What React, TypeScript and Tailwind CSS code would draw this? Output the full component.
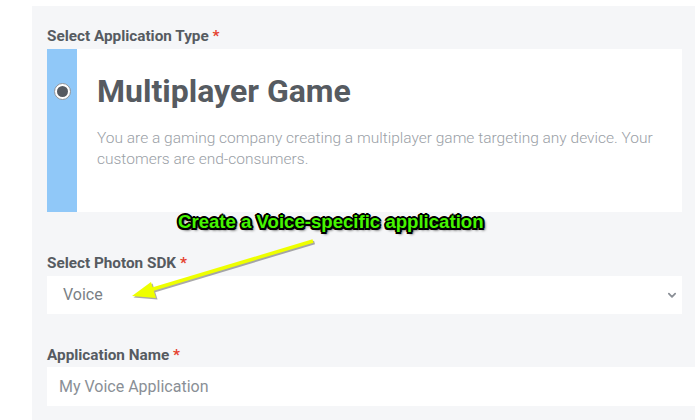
import React from "react";

const Label = ({ text }: { text: string }) => (
  <div className="h-[20px] text-[15.3px] leading-[20px] font-bold text-[#565b61]">
    {text} <span className="text-[#e5422f]">*</span>
  </div>
);

const App = () => {
  return (
    <div
      className="relative w-[695px] h-[420px] overflow-hidden bg-white"
      style={{ fontFamily: "Roboto, 'Liberation Sans', sans-serif" }}
    >
      <div className="ml-[32px] mt-[6px] h-[414px] bg-[#f5f6f8] pl-[15px] pt-[20px]">
        <Label text="Select Application Type" />

        {/* Application type card */}
        <div className="mt-[3px] flex h-[163px] w-[635px] bg-white">
          <div className="w-[30px] shrink-0 bg-[#90c8f8] pt-[34px] pl-[7px]">
            <div className="flex h-[17px] w-[17px] items-center justify-center rounded-full border border-[#8f949a] bg-white">
              <div className="h-[11px] w-[11px] rounded-full bg-[#555a61]" />
            </div>
          </div>
          <div className="pl-[20px] pr-[20px] pt-[22px]">
            <h1 className="text-[32px] leading-[40px] font-bold text-[#565b61]">
              Multiplayer Game
            </h1>
            <p className="mt-[17px] text-[15.5px] leading-[21px] font-light text-[#9aa0a6]">
              You are a gaming company creating a multiplayer game targeting any device. Your
              customers are end-consumers.
            </p>
          </div>
        </div>

        <div className="mt-[41px]">
          <Label text="Select Photon SDK" />
        </div>
        <div className="mt-[3px] flex h-[38px] w-[635px] items-center justify-between bg-white pl-[16px] pr-[1px]">
          <span className="text-[16px] text-[#7a7f85]">Voice</span>
          <svg width="18" height="18" viewBox="0 0 20 20" fill="none">
            <path d="M6.5 8.5l3.5 3.5 3.5-3.5" stroke="#8a8f96" strokeWidth="2" strokeLinecap="round" strokeLinejoin="round" />
          </svg>
        </div>

        <div className="mt-[31px]">
          <Label text="Application Name" />
        </div>
        <div className="mt-[2px] flex h-[39px] w-[680px] items-center bg-white pl-[12px]">
          <span className="text-[16px] text-[#8a8f96]">My Voice Application</span>
        </div>
      </div>

      {/* Annotation overlay */}
      <div
        className="absolute left-[178px] top-[210px] text-[18.6px] leading-[24px] font-bold text-[#46f500] [text-shadow:1.5px_1.5px_0_#000,-1.5px_-1.5px_0_#000,1.5px_-1.5px_0_#000,-1.5px_1.5px_0_#000,0_2px_0_#000,0_-2px_0_#000,2px_0_0_#000,-2px_0_0_#000,2px_2px_3px_#000]"
        style={{ fontFamily: "'Liberation Sans', Arial, sans-serif" }}
      >
        Create a Voice-specific application
      </div>
      <svg className="absolute left-0 top-0" width="695" height="420">
        <g transform="translate(1.5,1.5)" opacity="0.45">
          <line x1="313" y1="241" x2="150" y2="290" stroke="#444" strokeWidth="3.5" />
          <polygon points="132,296 151,282 156,298" fill="#444" />
        </g>
        <line x1="313" y1="241" x2="150" y2="290" stroke="#eeff00" strokeWidth="3.5" />
        <polygon points="132,296 151,282 156,298" fill="#eeff00" />
      </svg>
    </div>
  );
};

export default App;
